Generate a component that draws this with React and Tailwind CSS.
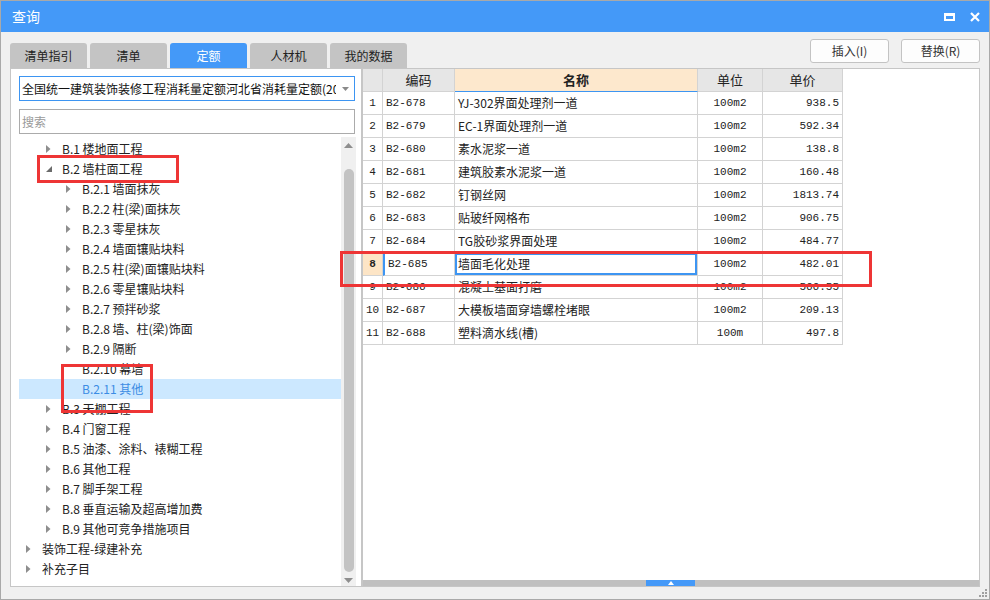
const tree = [
  { lv: 1, label: "B.1 楼地面工程", arrow: "r" },
  { lv: 1, label: "B.2 墙柱面工程", arrow: "d" },
  { lv: 2, label: "B.2.1 墙面抹灰", arrow: "r" },
  { lv: 2, label: "B.2.2 柱(梁)面抹灰", arrow: "r" },
  { lv: 2, label: "B.2.3 零星抹灰", arrow: "r" },
  { lv: 2, label: "B.2.4 墙面镶贴块料", arrow: "r" },
  { lv: 2, label: "B.2.5 柱(梁)面镶贴块料", arrow: "r" },
  { lv: 2, label: "B.2.6 零星镶贴块料", arrow: "r" },
  { lv: 2, label: "B.2.7 预拌砂浆", arrow: "r" },
  { lv: 2, label: "B.2.8 墙、柱(梁)饰面", arrow: "r" },
  { lv: 2, label: "B.2.9 隔断", arrow: "r" },
  { lv: 2, label: "B.2.10 幕墙", arrow: null },
  { lv: 2, label: "B.2.11 其他", arrow: null, selected: true },
  { lv: 1, label: "B.3 天棚工程", arrow: "r" },
  { lv: 1, label: "B.4 门窗工程", arrow: "r" },
  { lv: 1, label: "B.5 油漆、涂料、裱糊工程", arrow: "r" },
  { lv: 1, label: "B.6 其他工程", arrow: "r" },
  { lv: 1, label: "B.7 脚手架工程", arrow: "r" },
  { lv: 1, label: "B.8 垂直运输及超高增加费", arrow: "r" },
  { lv: 1, label: "B.9 其他可竞争措施项目", arrow: "r" },
  { lv: 0, label: "装饰工程-绿建补充", arrow: "r" },
  { lv: 0, label: "补充子目", arrow: "r" },
];

const rows = [
  ["1", "B2-678", "YJ-302界面处理剂一道", "100m2", "938.5"],
  ["2", "B2-679", "EC-1界面处理剂一道", "100m2", "592.34"],
  ["3", "B2-680", "素水泥浆一道", "100m2", "138.8"],
  ["4", "B2-681", "建筑胶素水泥浆一道", "100m2", "160.48"],
  ["5", "B2-682", "钉钢丝网", "100m2", "1813.74"],
  ["6", "B2-683", "贴玻纤网格布", "100m2", "906.75"],
  ["7", "B2-684", "TG胶砂浆界面处理", "100m2", "484.77"],
  ["8", "B2-685", "墙面毛化处理", "100m2", "482.01"],
  ["9", "B2-686", "混凝土基面打磨", "100m2", "566.55"],
  ["10", "B2-687", "大模板墙面穿墙螺栓堵眼", "100m2", "209.13"],
  ["11", "B2-688", "塑料滴水线(槽)", "100m", "497.8"],
];

const tabs = ["清单指引", "清单", "定额", "人材机", "我的数据"];

const indent = ["pl-[7px]", "pl-[27px]", "pl-[47px]"];

function TreeArrow({ type }) {
  if (type === "r") {
    return (
      <svg width="5" height="8" viewBox="0 0 5 8">
        <path d="M0 0 L4.5 4 L0 8 Z" fill="#8e8e8e" />
      </svg>
    );
  }
  if (type === "d") {
    return (
      <svg width="6" height="6" viewBox="0 0 6 6">
        <path d="M6 0 L6 6 L0 6 Z" fill="#6b6b6b" />
      </svg>
    );
  }
  return null;
}

function TreeRow({ item }) {
  return (
    <div
      className={`h-[20px] flex items-center ${indent[item.lv]} ${
        item.selected ? "bg-[#cce8ff] text-[#3b8ce4]" : "text-[#222]"
      }`}
    >
      <div className="w-[6px] flex items-center">
        <TreeArrow type={item.arrow} />
      </div>
      <span className="ml-[10px] whitespace-nowrap">{item.label}</span>
    </div>
  );
}

const mono = "font-['Liberation_Mono','Noto_Sans_CJK_SC',monospace] text-[11px]";

function TableRow({ r }) {
  const sel = r[0] === "8";
  return (
    <div className="flex h-[23px]">
      <div
        className={`w-[20px] border-r border-b border-[#d3d3d3] flex items-center justify-center ${mono} ${
          sel ? "bg-[#fde5c6] font-bold" : ""
        }`}
      >
        {r[0]}
      </div>
      <div
        className={`w-[72px] border-r border-b border-[#d3d3d3] flex items-center pl-[3px] ${mono} ${
          sel ? "border-l-2 border-l-[#3d95f2] pl-[1px]" : ""
        }`}
      >
        {r[1]}
      </div>
      <div className="w-[243px] border-r border-b border-[#d3d3d3] flex items-center">
        {sel ? (
          <div className="w-full h-full border-2 border-[#3d95f2] flex items-center pl-[1px] text-[12px]">
            {r[2]}
          </div>
        ) : (
          <span className="pl-[3px] text-[12px]">{r[2]}</span>
        )}
      </div>
      <div className={`w-[65px] border-r border-b border-[#d3d3d3] flex items-center justify-center ${mono}`}>
        {r[3]}
      </div>
      <div className={`w-[80px] border-r border-b border-[#d3d3d3] flex items-center justify-end pr-[3px] ${mono}`}>
        {r[4]}
      </div>
    </div>
  );
}

export default function App() {
  return (
    <div className="relative w-[990px] h-[600px] bg-[#f0f0f0] border border-[#a9a9a9] flex flex-col overflow-hidden font-['Noto_Sans_CJK_SC',sans-serif] text-[12px] text-[#222]">
      {/* title bar */}
      <div className="h-[31px] bg-[#4499f8] flex items-center justify-between pl-[11px] pr-[9px] text-white text-[14px]">
        <span>查询</span>
        <div className="flex items-center gap-[15px]">
          <div className="w-[11px] h-[8px] border-2 border-t-[3px] border-white" />
          <svg width="10" height="10" viewBox="0 0 10 10">
            <path d="M1 1 L9 9 M9 1 L1 9" stroke="white" strokeWidth="2.2" />
          </svg>
        </div>
      </div>

      {/* tabs + buttons */}
      <div className="h-[36px] flex justify-between px-[9px]">
        <div className="flex gap-[3px] self-end">
          {tabs.map((t) => (
            <div
              key={t}
              className={`w-[77px] h-[25px] rounded-t-[3px] flex items-center justify-center text-[12px] ${
                t === "定额" ? "bg-[#4499f8] text-white" : "bg-[#c4c4c4] text-[#222]"
              }`}
            >
              {t}
            </div>
          ))}
        </div>
        <div className="flex gap-[12px] mt-[7px]">
          <div className="w-[79px] h-[24px] bg-[#fdfdfd] border border-[#c3c3c3] rounded-[3px] flex items-center justify-center text-[#333]">
            插入(I)
          </div>
          <div className="w-[79px] h-[24px] bg-[#fdfdfd] border border-[#c3c3c3] rounded-[3px] flex items-center justify-center text-[#333]">
            替换(R)
          </div>
        </div>
      </div>

      {/* panels */}
      <div className="h-[519px] flex px-[9px]">
        <div className="w-[352px] h-full bg-white border border-[#c6c6c6] flex flex-col pt-[7px] pl-[8px]">
          <div className="w-[336px] h-[25px] border border-[#3d95f2] flex items-center pl-[2px] pr-[5px]">
            <div className="flex-1 overflow-hidden whitespace-nowrap text-[#111]">
              全国统一建筑装饰装修工程消耗量定额河北省消耗量定额(2012)
            </div>
            <svg width="7" height="4" viewBox="0 0 7 4" className="ml-[6px]">
              <path d="M0 0 L7 0 L3.5 4 Z" fill="#8a8a8a" />
            </svg>
          </div>
          <div className="w-[336px] h-[25px] mt-[8px] border border-[#ababab] flex items-center pl-[2px] text-[#9a9a9a]">
            搜索
          </div>
          <div className="flex-1 flex mt-[3px] min-h-0">
            <div className="w-[322px] pt-[2px]">
              {tree.map((it) => (
                <TreeRow key={it.label} item={it} />
              ))}
            </div>
            <div className="w-[15px] bg-[#f0f0f0] flex flex-col items-center">
              <svg width="9" height="5" viewBox="0 0 9 5" className="mt-[6px]">
                <path d="M0 5 L4.5 0 L9 5 Z" fill="#8e8e8e" />
              </svg>
              <div className="w-[10px] mt-[21px] h-[403px] rounded-full bg-[#c3c3c3]" />
              <svg width="9" height="5" viewBox="0 0 9 5" className="mt-[6px]">
                <path d="M0 0 L9 0 L4.5 5 Z" fill="#8e8e8e" />
              </svg>
            </div>
          </div>
        </div>

        <div className="flex-1 h-full bg-white border border-[#c6c6c6] flex flex-col">
          <div className="flex-1">
            <div className="flex h-[23px]">
              <div className="w-[20px] bg-[#e6e6e6] border-r border-b border-[#d3d3d3]" />
              <div className="w-[72px] bg-[#e6e6e6] border-r border-b border-[#d3d3d3] flex items-center justify-center text-[13px]">
                编码
              </div>
              <div className="w-[243px] bg-[#fde8cd] border-r border-[#d3d3d3] border-b border-b-[#3d95f2] flex items-center justify-center text-[13px] font-bold">
                名称
              </div>
              <div className="w-[65px] bg-[#e6e6e6] border-r border-b border-[#d3d3d3] flex items-center justify-center text-[13px]">
                单位
              </div>
              <div className="w-[80px] bg-[#e6e6e6] border-r border-b border-[#d3d3d3] flex items-center justify-center text-[13px]">
                单价
              </div>
            </div>
            {rows.map((r) => (
              <TableRow key={r[0]} r={r} />
            ))}
          </div>
          <div className="h-[6px] bg-[#c0c0c0] flex">
            <div className="ml-[283px] w-[49px] h-full bg-[#4499f8] flex items-center justify-center">
              <svg width="6" height="4" viewBox="0 0 6 4">
                <path d="M0 4 L3 0 L6 4 Z" fill="white" />
              </svg>
            </div>
          </div>
        </div>
      </div>

      {/* resize grip */}
      <div className="absolute right-[2px] bottom-[2px] grid grid-cols-3 gap-[1px] w-[8px] h-[8px]">
        <span />
        <span />
        <span className="bg-[#a0a0a0]" />
        <span />
        <span className="bg-[#a0a0a0]" />
        <span className="bg-[#a0a0a0]" />
        <span className="bg-[#a0a0a0]" />
        <span className="bg-[#a0a0a0]" />
        <span className="bg-[#a0a0a0]" />
      </div>

      {/* red annotation boxes */}
      <div className="absolute left-[36px] top-[154px] w-[142px] h-[28px] border-[3px] border-[#ee3535]" />
      <div className="absolute left-[60px] top-[363px] w-[92px] h-[49px] border-[3px] border-[#ee3535]" />
      <div className="absolute left-[339px] top-[250px] w-[532px] h-[36px] border-[3px] border-[#ee3535]" />
    </div>
  );
}
